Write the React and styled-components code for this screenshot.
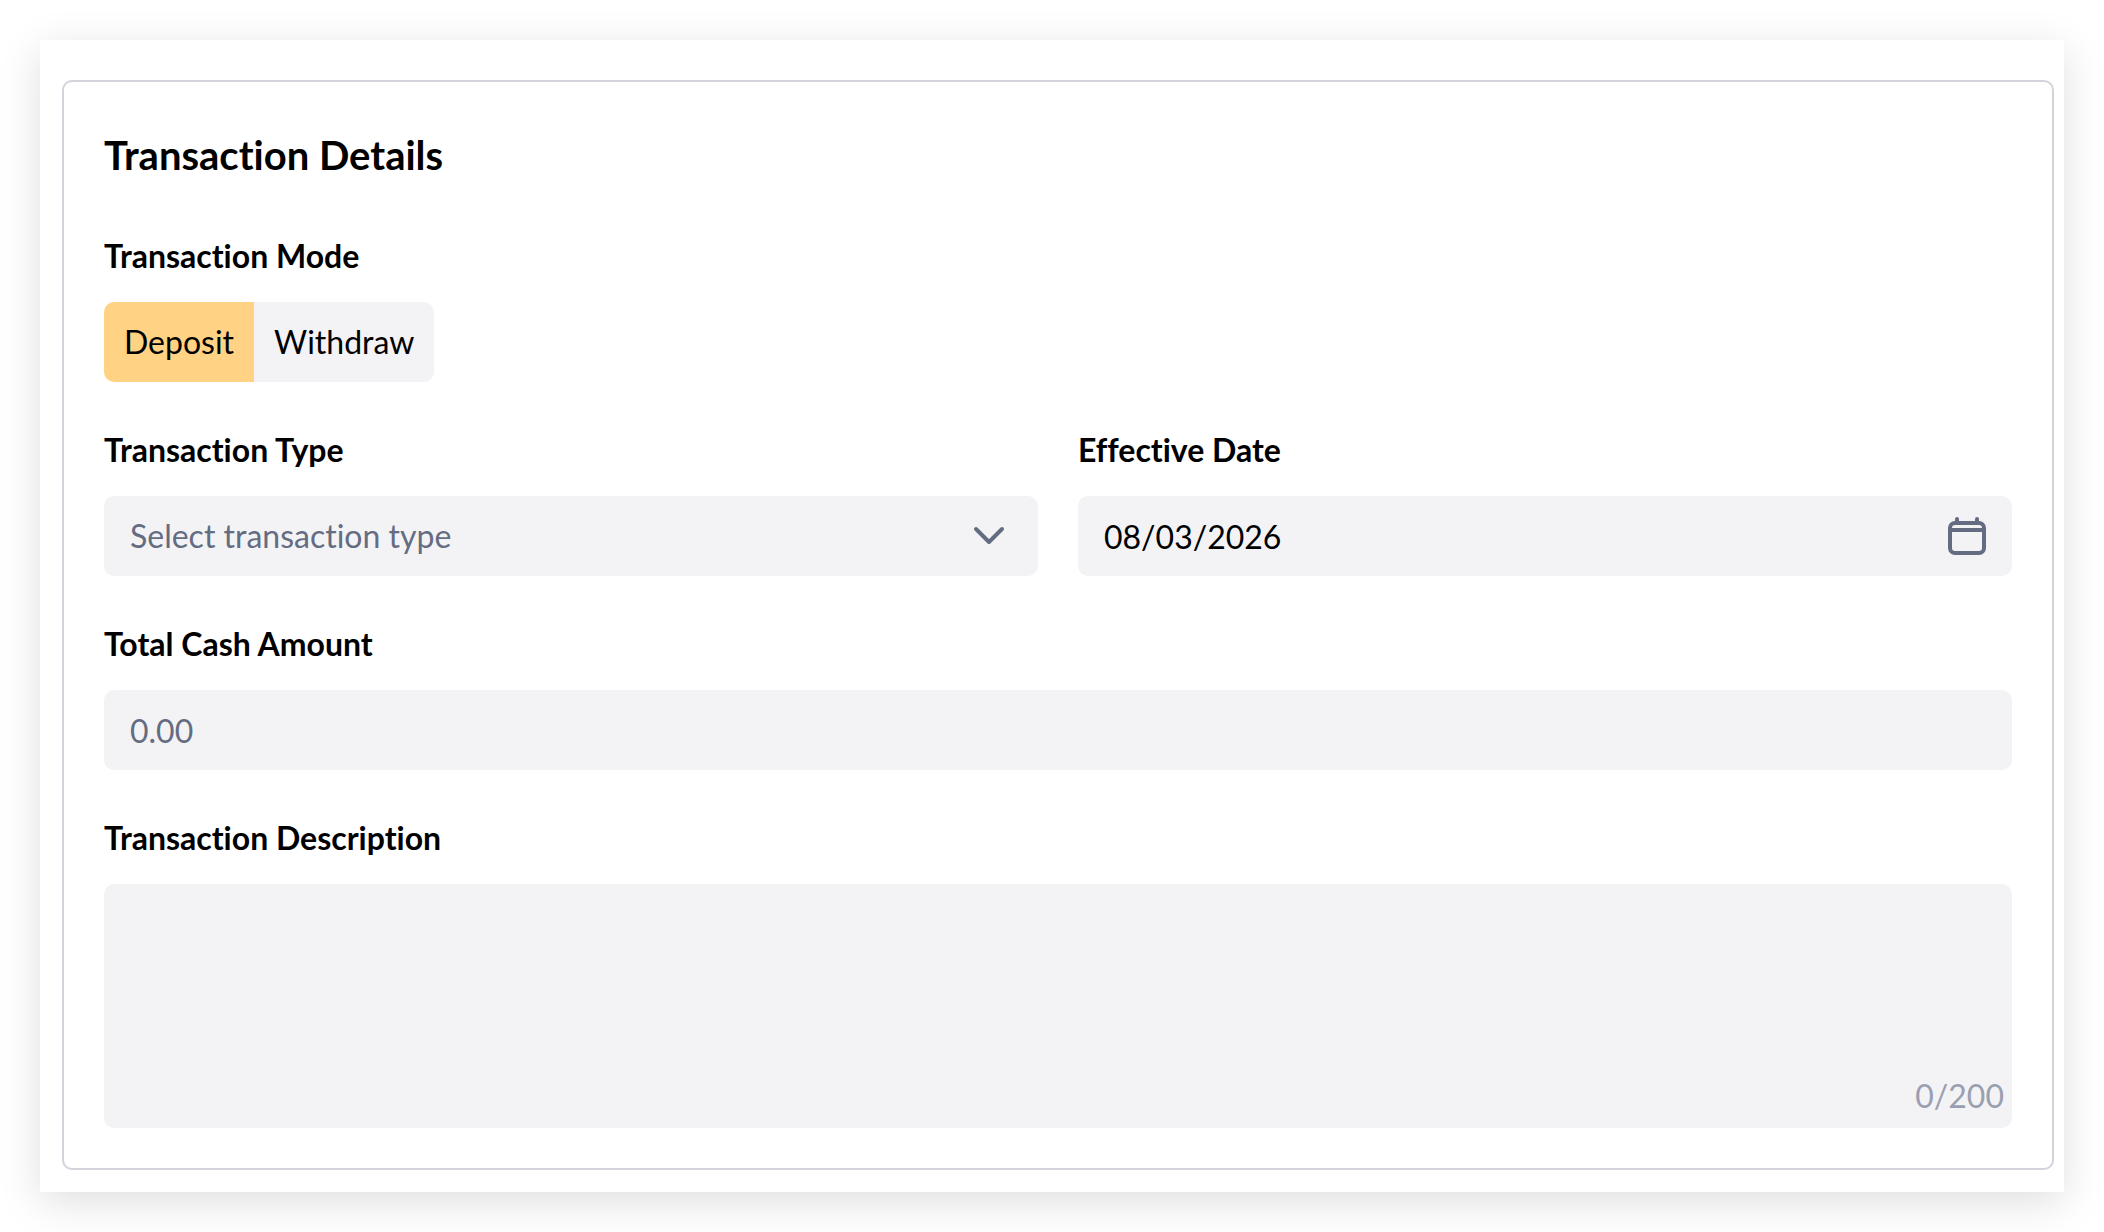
import React, { useState } from 'react';
import styled, { createGlobalStyle } from 'styled-components'

const GlobalStyle = createGlobalStyle`
    *, *::before, *::after {
        box-sizing: border-box;
    }
    body {
        margin: 0;
        background-color: #fff;
        color: #000;
        font-family: Lato, 'Open Sans', sans-serif;
        font-size: 32px;
        line-height: 40px;
        font-variant-ligatures: none;
    }
    button, input, select, textarea {
        font: inherit;
        font-variant-ligatures: none;
        color: inherit;
    }
`

const Page = styled.main`
    padding: 40px;
`
const Sheet = styled.div`
    padding: 40px 10px 22px 22px;
    background-color: #fff;
    box-shadow: 0 10px 40px rgba(0, 0, 0, 0.13);
`
const Panel = styled.form`
    display: flex;
    flex-direction: column;
    gap: 48px;
    padding: 40px;
    border: 2px solid #d3d3dc;
    border-radius: 10px;
`
const Title = styled.h2`
    margin: 0;
    font-size: 40px;
    line-height: 66px;
    font-weight: 700;
`
const Row = styled.div`
    display: grid;
    grid-template-columns: 1fr 1fr;
    gap: 40px;
`
const Field = styled.div`
    display: flex;
    flex-direction: column;
    gap: 26px;
    min-width: 0;
`
const Label = styled.label`
    font-weight: 700;
`
const Toggle = styled.div`
    display: flex;
    align-self: flex-start;
    border-radius: 10px;
    overflow: hidden;
`
const ToggleButton = styled.button`
    height: 80px;
    padding: 0 20px;
    border: 0;
    background-color: ${props => props.$active ? '#ffd383' : '#f3f3f6'};
    cursor: pointer;
`
const Control = styled.div`
    position: relative;
    display: flex;
    border-radius: 10px;
    background-color: #f3f3f6;
`
const Input = styled.input`
    width: 100%;
    height: 80px;
    padding: 0 26px;
    border: 0;
    border-radius: 10px;
    background: transparent;
    &::placeholder {
        color: #646c82;
        opacity: 1;
    }
`
const Select = styled.select`
    width: 100%;
    height: 80px;
    padding: 0 80px 0 26px;
    border: 0;
    border-radius: 10px;
    background: transparent;
    color: #646c82;
    appearance: none;
`
const TextArea = styled.textarea`
    width: 100%;
    height: 244px;
    padding: 20px 26px;
    border: 0;
    border-radius: 10px;
    background: transparent;
    resize: none;
`
const ControlIcon = styled.svg`
    position: absolute;
    top: 16px;
    right: 20px;
    width: 48px;
    height: 48px;
    fill: none;
    stroke: #646c82;
    stroke-width: 4;
    pointer-events: none;
`
const Counter = styled.span`
    position: absolute;
    right: 8px;
    bottom: 12px;
    color: #9a9fb0;
`

const modes = ['Deposit', 'Withdraw']

const App = () => {
    const [mode, setMode] = useState('Deposit')
    const [type, setType] = useState('')
    const [date, setDate] = useState('08/03/2026')
    const [amount, setAmount] = useState('')
    const [description, setDescription] = useState('')

    return (
        <Page>
            <GlobalStyle />
            <Sheet>
                <Panel>
                    <Title>Transaction Details</Title>
                    <Field>
                        <Label as='span' id='mode-label'>Transaction Mode</Label>
                        <Toggle role='group' aria-labelledby='mode-label'>
                            {modes.map(item => (
                                <ToggleButton
                                    key={item}
                                    type='button'
                                    $active={mode === item}
                                    aria-pressed={mode === item}
                                    onClick={() => setMode(item)}
                                >
                                    {item}
                                </ToggleButton>
                            ))}
                        </Toggle>
                    </Field>
                    <Row>
                        <Field>
                            <Label htmlFor='type'>Transaction Type</Label>
                            <Control>
                                <Select id='type' value={type} onChange={e => setType(e.target.value)}>
                                    <option value=''>Select transaction type</option>
                                    <option value='cash'>Cash</option>
                                    <option value='transfer'>Transfer</option>
                                </Select>
                                <ControlIcon viewBox='0 0 48 48' aria-hidden='true'>
                                    <path d='M6 17L19 30L32 17' strokeLinecap='round' strokeLinejoin='round' />
                                </ControlIcon>
                            </Control>
                        </Field>
                        <Field>
                            <Label htmlFor='date'>Effective Date</Label>
                            <Control>
                                <Input id='date' value={date} onChange={e => setDate(e.target.value)} />
                                <ControlIcon viewBox='0 0 48 48' aria-hidden='true'>
                                    <rect x='6' y='11' width='34' height='30' rx='5' />
                                    <path d='M6 18H40' />
                                    <path d='M13 11V7M33 11V7' strokeLinecap='round' />
                                </ControlIcon>
                            </Control>
                        </Field>
                    </Row>
                    <Field>
                        <Label htmlFor='amount'>Total Cash Amount</Label>
                        <Control>
                            <Input id='amount' placeholder='0.00' inputMode='decimal' value={amount} onChange={e => setAmount(e.target.value)} />
                        </Control>
                    </Field>
                    <Field>
                        <Label htmlFor='description'>Transaction Description</Label>
                        <Control>
                            <TextArea id='description' maxLength={200} value={description} onChange={e => setDescription(e.target.value)} />
                            <Counter>{description.length}/200</Counter>
                        </Control>
                    </Field>
                </Panel>
            </Sheet>
        </Page>
    );
};

export default App;
